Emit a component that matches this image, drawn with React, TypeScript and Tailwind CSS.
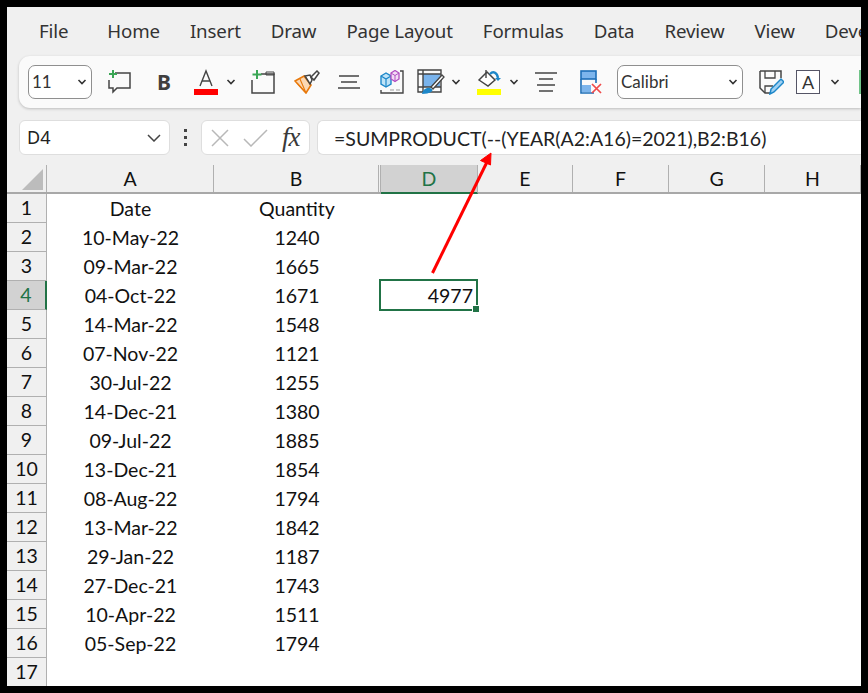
import React from "react";

const rows: [string, string][] = [
  ["Date", "Quantity"],
  ["10-May-22", "1240"],
  ["09-Mar-22", "1665"],
  ["04-Oct-22", "1671"],
  ["14-Mar-22", "1548"],
  ["07-Nov-22", "1121"],
  ["30-Jul-22", "1255"],
  ["14-Dec-21", "1380"],
  ["09-Jul-22", "1885"],
  ["13-Dec-21", "1854"],
  ["08-Aug-22", "1794"],
  ["13-Mar-22", "1842"],
  ["29-Jan-22", "1187"],
  ["27-Dec-21", "1743"],
  ["10-Apr-22", "1511"],
  ["05-Sep-22", "1794"],
  ["", ""],
];

const menu = ["Home", "Insert", "Draw", "Page Layout", "Formulas", "Data", "Review", "View", "Developer"];
const cols = [
  { l: "A", w: "w-[167px]" },
  { l: "B", w: "w-[165px]" },
  { l: "C", w: "w-0" },
  { l: "D", w: "w-[97px]" },
  { l: "E", w: "w-[95px]" },
  { l: "F", w: "w-[96px]" },
  { l: "G", w: "w-[96px]" },
  { l: "H", w: "w-[96px]" },
];

function Chev({ className = "" }: { className?: string }) {
  return (
    <svg width="10" height="6" viewBox="0 0 10 6" className={className}>
      <path d="M1.500 1l3.500 3.500 3.500-3.500" fill="none" stroke="#333" strokeWidth="1.6" />
    </svg>
  );
}

function Select({ text, className }: { text: string; className: string }) {
  return (
    <div className={"h-[34px] rounded-[7px] border border-[#8f8f8f] bg-white flex items-center justify-between pl-[3px] pr-[4px] text-[17px] text-[#333] font-['Lato','Liberation_Sans',sans-serif] " + className}>
      <span>{text}</span>
      <Chev />
    </div>
  );
}

const Gray = "#444";

export default function App() {
  return (
    <div className="relative w-[868px] h-[693px] bg-black p-[7px] overflow-hidden">
      <div className="w-[854px] h-[679px] bg-[#f0f0f0] flex flex-col overflow-hidden">
        <div className="h-[49px] shrink-0 flex items-center pl-[32px] gap-[30px] whitespace-nowrap text-[18.7px] text-[#333] font-['Noto_Sans','Open_Sans',sans-serif] tracking-[-0.15px]">
          <span className="mr-[9px]">File</span>
          {menu.map((m) => <span key={m}>{m}</span>)}
        </div>

        <div className="h-[52px] shrink-0 ml-[12px] rounded-l-[11px] bg-[#fafafa] shadow-[0_1px_3px_rgba(0,0,0,0.22)] flex items-center pl-[9px] overflow-hidden">
          <Select text="11" className="w-[64px] shrink-0" />
          <svg width="24" height="24" viewBox="0 0 24 24" className="ml-[15px] shrink-0">
            <path d="M8 3h15v15H10l-4 4v-4H2V10" fill="none" stroke={Gray} strokeWidth="1.5" />
            <path d="M6 0v8M2 4h8" stroke="#3aa655" strokeWidth="2" />
          </svg>
          <span className="ml-[26px] w-[14px] shrink-0 text-[21px] font-bold text-[#3f3f3f] font-['Noto_Sans',sans-serif] leading-none">B</span>
          <svg width="24" height="26" viewBox="0 0 24 26" className="ml-[23px] shrink-0">
            <path d="M6 17L12 2l6 15M8 12h8" fill="none" stroke={Gray} strokeWidth="1.4" />
            <rect x="0" y="20" width="24" height="6" fill="#ff0000" />
          </svg>
          <Chev className="ml-[8px] shrink-0" />
          <svg width="24" height="24" viewBox="0 0 24 24" className="ml-[15px] shrink-0">
            <path d="M10 4h13v19H1V10" fill="none" stroke={Gray} strokeWidth="1.5" />
            <path d="M15 2h8v3h-8z" fill="none" stroke={Gray} strokeWidth="1" />
            <path d="M6 0v9M1.500 4.500h9" stroke="#3aa655" strokeWidth="2" />
          </svg>
          <svg width="26" height="24" viewBox="0 0 26 24" className="ml-[19px] shrink-0">
            <path d="M1 11l9-5 7 9-5 8z" fill="#fbd8b4" stroke="#e8790c" strokeWidth="1.6" />
            <path d="M6 9l6 14M3 13l8 9" stroke="#e8790c" strokeWidth="1.1" />
            <path d="M11 6l5-1 2 5-2 4z" fill="#fff" stroke={Gray} strokeWidth="1.5" />
            <path d="M17 7l6-6 2 2-5 7z" fill="#fff" stroke={Gray} strokeWidth="1.5" />
          </svg>
          <svg width="22" height="14" viewBox="0 0 22 14" className="ml-[18px] shrink-0">
            <path d="M1 1h20M3 7h16M0 13h22" stroke={Gray} strokeWidth="1.5" />
          </svg>
          <svg width="24" height="24" viewBox="0 0 24 24" className="ml-[20px] shrink-0">
            <path d="M1 6l5-3 5 3v8l-5 3-5-3z" fill="#bfe3f7" stroke="#1d87c9" strokeWidth="1.4" />
            <path d="M1 6l5 3 5-3M6 9v8" fill="none" stroke="#1d87c9" strokeWidth="1.2" />
            <path d="M11 3l4-2.500 4 2.500v6l-4 2.500-4-2.500z" fill="#f3dcf5" stroke="#b24ec2" strokeWidth="1.3" />
            <path d="M11 3l4 2.500 4-2.500M15 5.500v6" fill="none" stroke="#b24ec2" strokeWidth="1" />
            <path d="M20 1h3v22H1v-3" fill="none" stroke={Gray} strokeWidth="1.4" />
            <path d="M10 20h4M16 20h4" stroke="#999" strokeWidth="1" />
          </svg>
          <svg width="28" height="26" viewBox="0 0 28 26" className="ml-[13px] shrink-0">
            <rect x="6" y="5" width="17" height="13" fill="#79b3ec" />
            <path d="M1 1h23v22H1zM1 5h23M1 18h23M6 1v22" fill="none" stroke={Gray} strokeWidth="1.4" />
            <path d="M14 18l11-12 2 2-11 12z" fill="#fff" stroke={Gray} strokeWidth="1.3" />
            <path d="M5 25c1-5 5-7 8-6s3 3 1 4-5 2-9 2z" fill="#1d87c9" />
          </svg>
          <Chev className="ml-[6px] shrink-0" />
          <svg width="24" height="26" viewBox="0 0 24 26" className="ml-[16px] shrink-0">
            <path d="M2 11l8-8 8 8-7 6z" fill="#fff" stroke={Gray} strokeWidth="1.5" />
            <path d="M9 1v8" stroke={Gray} strokeWidth="1.4" />
            <path d="M13 5c3-3 7-2 8 4" fill="none" stroke="#1d87c9" strokeWidth="2.4" />
            <path d="M18 9h6l-3 3z" fill="#1d87c9" />
            <rect x="0" y="20" width="24" height="6" fill="#ffff00" />
          </svg>
          <Chev className="ml-[8px] shrink-0" />
          <svg width="22" height="20" viewBox="0 0 22 20" className="ml-[16px] shrink-0">
            <path d="M0 1h22M4 7h14M2 13h18M4 19h14" stroke={Gray} strokeWidth="1.5" />
          </svg>
          <svg width="22" height="24" viewBox="0 0 22 24" className="ml-[23px] shrink-0">
            <rect x="1" y="1" width="15" height="8" fill="#7db5ec" stroke="#1d6fb8" strokeWidth="1.6" />
            <path d="M1 9v14h13M16 9v4" fill="none" stroke="#1d6fb8" strokeWidth="1.6" />
            <rect x="2" y="15" width="9" height="7" fill="#7db5ec" />
            <path d="M12 14l9 9M21 14l-9 9" stroke="#f04a4a" strokeWidth="1.7" />
          </svg>
          <Select text="Calibri" className="w-[126px] ml-[15px] shrink-0" />
          <svg width="25" height="25" viewBox="0 0 25 25" className="ml-[16px] shrink-0">
            <path d="M1 1h21v7M1 1v17l5 5h6" fill="none" stroke={Gray} strokeWidth="1.5" />
            <path d="M6 1v7h10V1M6 23v-7h8" fill="none" stroke={Gray} strokeWidth="1.3" />
            <path d="M11 24l1-5 10-10 3 3-10 10z" fill="#9fd0f2" stroke="#1d87c9" strokeWidth="1.5" />
          </svg>
          <div className="ml-[12px] w-[24px] h-[24px] shrink-0 border border-[#556] bg-white flex items-center justify-center text-[18px] leading-none text-[#333] font-['Lato',sans-serif]">A</div>
          <Chev className="ml-[10px] shrink-0" />
          <div className="ml-[19px] w-[6px] h-[24px] shrink-0 bg-[#70c388]" />
        </div>

        <div className="h-[35px] mt-[12px] shrink-0 flex items-stretch pl-[12px] text-[#222]">
          <div className="w-[151px] shrink-0 rounded-[6px] border border-[#dedede] bg-white flex items-center justify-between pl-[7px] pr-[8px] text-[18px] font-['Noto_Sans',sans-serif]">
            <span>D4</span>
            <svg width="14" height="8" viewBox="0 0 14 8"><path d="M1 1l6 6 6-6" fill="none" stroke="#444" strokeWidth="1.5" /></svg>
          </div>
          <div className="w-[31px] shrink-0 flex flex-col items-center justify-center gap-[4px]">
            <span className="w-[3px] h-[3px] bg-[#444]" />
            <span className="w-[3px] h-[3px] bg-[#444]" />
            <span className="w-[3px] h-[3px] bg-[#444]" />
          </div>
          <div className="w-[109px] shrink-0 rounded-[6px] border border-[#dedede] bg-white flex items-center pl-[9px]">
            <svg width="18" height="18" viewBox="0 0 18 18"><path d="M1 1l16 16M17 1L1 17" stroke="#b8b8b8" strokeWidth="1.5" /></svg>
            <svg width="25" height="18" viewBox="0 0 25 18" className="ml-[14px]"><path d="M1 10l7 7L24 1" fill="none" stroke="#b8b8b8" strokeWidth="1.5" /></svg>
            <span className="ml-[14px] text-[27px] leading-none italic text-[#3a3a3a] font-['Liberation_Serif',serif] tracking-[-1px]">fx</span>
          </div>
          <div className="ml-[7px] flex-1 rounded-l-[6px] border border-r-0 border-[#dedede] bg-white flex items-center pl-[16px] pt-[2px] whitespace-nowrap text-[19.5px] text-[#222] font-['Lato',sans-serif]">
            =SUMPRODUCT(--(YEAR(A2:A16)=2021),B2:B16)
          </div>
        </div>

        <div className="h-[29px] mt-[10px] shrink-0 flex border-b-2 border-[#a8a8a8] font-['Lato',sans-serif] text-[19.5px] text-[#111]">
          <div className="w-[40px] shrink-0 border-r border-[#b0b0b0] relative">
            <svg width="22" height="22" viewBox="0 0 22 22" className="absolute left-[15px] top-[4px]"><path d="M0 21L21 0v21z" fill="#bcbcbc" /></svg>
          </div>
          {cols.map((c) => c.l === "C" ? (
            <div key={c.l} className="w-[2px] shrink-0 border-r border-[#b0b0b0]" />
          ) : (
            <div key={c.l} className={c.w + " shrink-0 flex items-center justify-center pt-[1px] " + (c.l === "D" ? "bg-[#d2d2d2] text-[#217346] -mb-[2px] border-b-2 border-[#217346] border-r border-r-[#b0b0b0]" : "border-r border-[#b0b0b0]")}>
              {c.l}
            </div>
          ))}
        </div>

        <div className="flex-1 overflow-hidden relative font-['Lato',sans-serif] text-[19.5px] text-[#111] bg-white">
          {rows.map((r, i) => (
            <div key={i} className="flex h-[29px]">
              <div className={"w-[40px] shrink-0 flex items-center justify-center border-b border-[#b0b0b0] " + (i === 3 ? "bg-[#d2d2d2] text-[#217346] border-r-2 border-r-[#217346]" : "bg-[#f0f0f0] border-r border-r-[#b0b0b0]")}>
                {i + 1}
              </div>
              <div className="w-[167px] shrink-0 flex items-center justify-center">{r[0]}</div>
              <div className="w-[166px] shrink-0 flex items-center justify-center">{r[1]}</div>
              {i === 3 && (
                <div className="relative w-[99px] h-[32px] -mt-[2px] -ml-px shrink-0 border-2 border-[#217346] flex items-center justify-end pr-[3px] pt-[2px]">
                  4977
                  <span className="absolute -right-[3px] -bottom-[3px] w-[7px] h-[7px] bg-[#217346] border-l border-t border-white" />
                </div>
              )}
            </div>
          ))}
        </div>
      </div>

      <svg width="868" height="693" viewBox="0 0 868 693" className="absolute left-0 top-0 pointer-events-none">
        <path d="M432.500 273L487 162" stroke="#ff0000" strokeWidth="3" />
        <path d="M491 153l-10.500 7.500 10 4.500z" fill="#ff0000" stroke="#ff0000" strokeWidth="1" />
      </svg>
    </div>
  );
}
